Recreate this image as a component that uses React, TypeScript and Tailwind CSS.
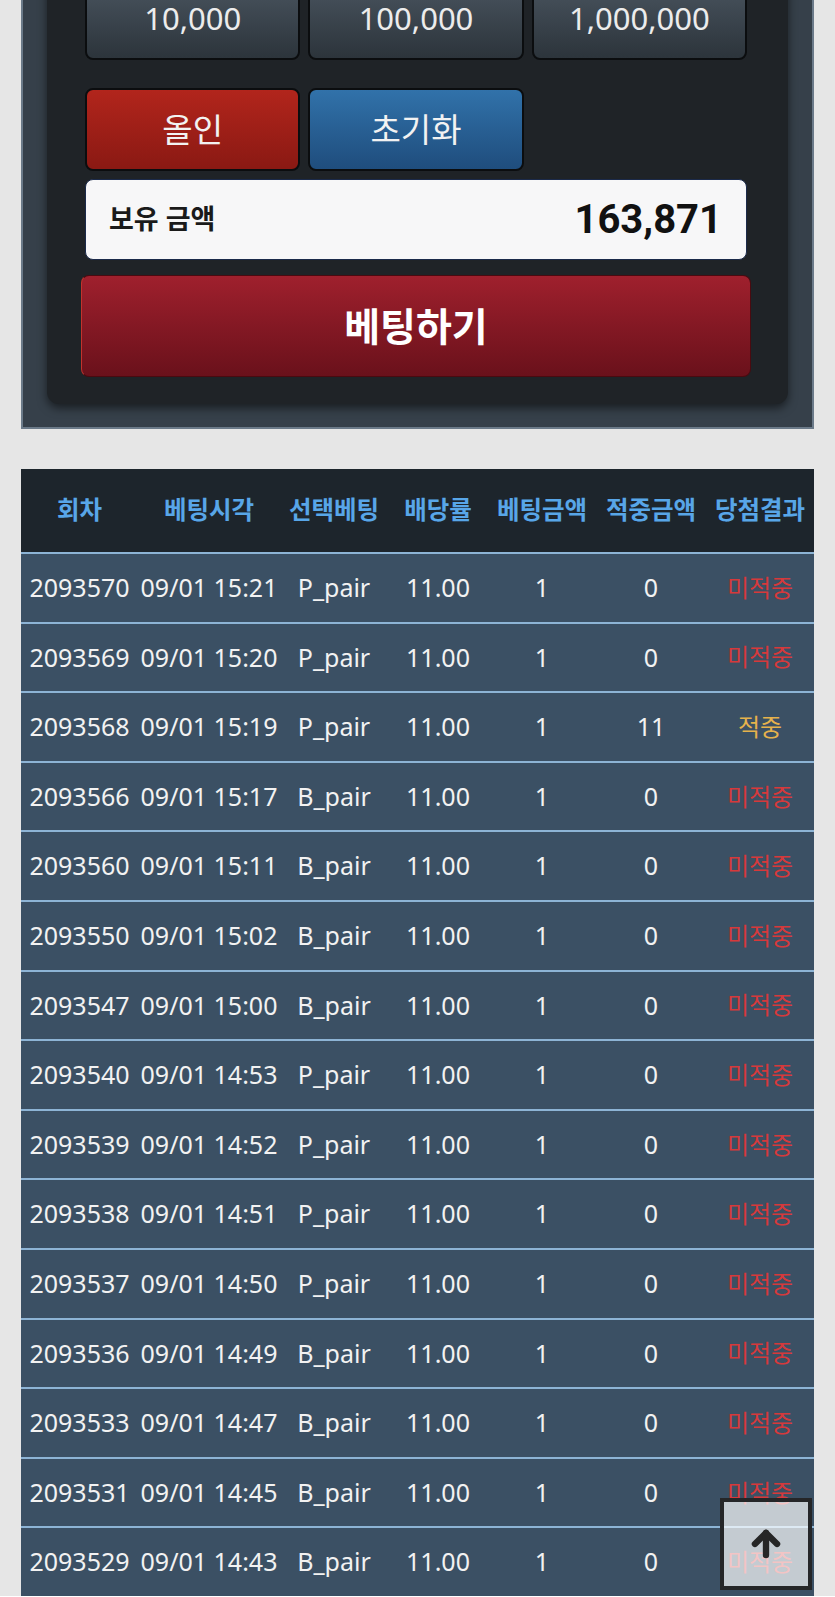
import { ArrowUp } from "lucide-react";

const KR = "font-['Noto_Sans','Noto_Sans_CJK_KR',sans-serif]";

type Row = { no: string; time: string; pick: string; win: boolean };

const rows: Row[] = [
  { no: "2093570", time: "09/01 15:21", pick: "P_pair", win: false },
  { no: "2093569", time: "09/01 15:20", pick: "P_pair", win: false },
  { no: "2093568", time: "09/01 15:19", pick: "P_pair", win: true },
  { no: "2093566", time: "09/01 15:17", pick: "B_pair", win: false },
  { no: "2093560", time: "09/01 15:11", pick: "B_pair", win: false },
  { no: "2093550", time: "09/01 15:02", pick: "B_pair", win: false },
  { no: "2093547", time: "09/01 15:00", pick: "B_pair", win: false },
  { no: "2093540", time: "09/01 14:53", pick: "P_pair", win: false },
  { no: "2093539", time: "09/01 14:52", pick: "P_pair", win: false },
  { no: "2093538", time: "09/01 14:51", pick: "P_pair", win: false },
  { no: "2093537", time: "09/01 14:50", pick: "P_pair", win: false },
  { no: "2093536", time: "09/01 14:49", pick: "B_pair", win: false },
  { no: "2093533", time: "09/01 14:47", pick: "B_pair", win: false },
  { no: "2093531", time: "09/01 14:45", pick: "B_pair", win: false },
  { no: "2093529", time: "09/01 14:43", pick: "B_pair", win: false },
];

const headers = ["회차", "베팅시각", "선택베팅", "배당률", "베팅금액", "적중금액", "당첨결과"];

const cols = "grid grid-cols-[117px_142px_108px_100px_108px_110px_108px]";

function Chip({ label }: { label: string }) {
  return (
    <button className="h-[83px] rounded-lg border-2 border-[#0b0d0f] bg-gradient-to-b from-[#4b5661] to-[#2c343b] text-[31px] text-[#ececec]">
      {label}
    </button>
  );
}

export default function App() {
  return (
    <div className={`min-h-screen bg-[#e6e6e6] px-[21px] ${KR}`}>
      {/* bet panel, scrolled so its top row is partly cut off */}
      <div className="-mt-[23px] border-x-2 border-b-2 border-[#6b7a89] bg-[#36404a] pl-[24px] pr-[24px] pb-[23px]">
        <div className="rounded-b-xl bg-[#1f2327] pl-[38px] pr-[41px] pb-[27px] shadow-[0_4px_10px_rgba(0,0,0,0.55)]">
          <div className="grid grid-cols-3 gap-[8px]">
            <Chip label="10,000" />
            <Chip label="100,000" />
            <Chip label="1,000,000" />
          </div>
          <div className="mt-[28px] grid grid-cols-3 gap-[8px]">
            <button className="h-[83px] rounded-lg border-2 border-[#0b0d0f] bg-gradient-to-b from-[#b2251c] to-[#8a1913] text-[33px] text-[#f2f2f2]">
              올인
            </button>
            <button className="h-[83px] rounded-lg border-2 border-[#0b0d0f] bg-gradient-to-b from-[#3172aa] to-[#1f4d7d] text-[33px] text-[#f2f2f2]">
              초기화
            </button>
          </div>
          <div className="mt-[8px] flex h-[81px] items-center justify-between rounded-lg border border-[#1b2a4a] bg-[#f7f7f8] pl-[23px] pr-[24px]">
            <span className="text-[27px] font-bold text-[#1a1a1a]">보유 금액</span>
            <span className="font-['Roboto',sans-serif] text-[40px] font-bold text-[#111]">163,871</span>
          </div>
          <button className="mx-[-4px] mt-[15px] flex h-[102px] w-[calc(100%+8px)] items-center justify-center rounded-lg border border-[#4a0a10] border-l-[#c2332c] bg-gradient-to-b from-[#9f202d] to-[#6a111b] text-[39px] font-bold text-white">
            베팅하기
          </button>
        </div>
      </div>

      {/* history table */}
      <div className="mt-[40px] w-full">
        <div className={`${cols} h-[83px] items-center bg-[#1d252c] text-center text-[24.5px] font-bold text-[#58a6e8]`}>
          {headers.map((h) => (
            <div key={h} className="whitespace-nowrap">
              {h}
            </div>
          ))}
        </div>
        {rows.map((r) => (
          <div
            key={r.no}
            className={`${cols} h-[69.6px] items-center border-t-2 border-[#8db4d5] bg-[#3b5064] text-center text-[25px] text-[#f2f2f2]`}
          >
            <div>{r.no}</div>
            <div className="whitespace-nowrap">{r.time}</div>
            <div>{r.pick}</div>
            <div>11.00</div>
            <div>1</div>
            <div>{r.win ? "11" : "0"}</div>
            <div className={`text-[24px] ${r.win ? "text-[#e6b24c]" : "text-[#d6393b]"}`}>
              {r.win ? "적중" : "미적중"}
            </div>
          </div>
        ))}
      </div>

      <button className="fixed bottom-[7px] right-[23px] flex h-[92px] w-[92px] items-center justify-center border-4 border-[#252628] bg-white/70">
        <ArrowUp size={38} strokeWidth={4} className="text-[#262626]" />
      </button>
    </div>
  );
}
